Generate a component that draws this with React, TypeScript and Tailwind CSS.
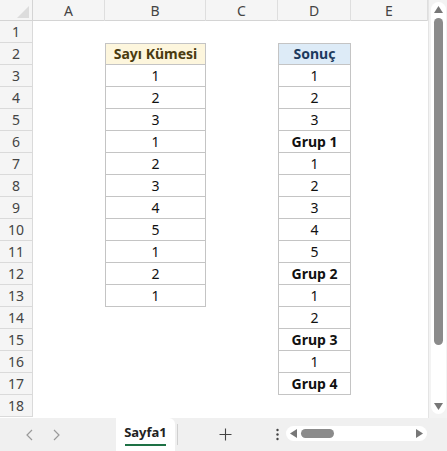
import React from "react";

const bVals: (string | null)[] = [null, "Sayı Kümesi", "1", "2", "3", "1", "2", "3", "4", "5", "1", "2", "1", null, null, null, null, null];
const dVals: (string | null)[] = [null, "Sonuç", "1", "2", "3", "Grup 1", "1", "2", "3", "4", "5", "Grup 2", "1", "2", "Grup 3", "1", "Grup 4", null];

function Cell({ v, kind, first }: { v: string | null; kind: "b" | "d"; first: boolean }) {
  if (v === null) return <div />;
  const header = first;
  const bold = header || v.startsWith("Grup");
  let bg = "bg-white";
  let color = "text-[#111]";
  if (header && kind === "b") {
    bg = "bg-[#fdf6dd]";
    color = "text-[#4a3b10]";
  }
  if (header && kind === "d") {
    bg = "bg-[#ddebf7]";
    color = "text-[#1c3a5e]";
  }
  return (
    <div
      className={`${bg} ${color} ${bold ? "font-bold" : ""} ${header ? "border-t" : ""} border-l border-r border-b border-[#c4c4c4] flex items-center justify-center text-[14px] leading-none h-[22px]`}
    >
      {v}
    </div>
  );
}

export default function App() {
  const rows = Array.from({ length: 18 }, (_, i) => i);
  return (
    <div
      className="w-[447px] h-[451px] flex flex-col bg-white overflow-hidden"
      style={{ fontFamily: '"Noto Sans", "Open Sans", sans-serif' }}
    >
      <div className="flex flex-1 min-h-0">
        <div className="flex-1 flex flex-col">
          {/* column headers */}
          <div className="grid grid-cols-[33px_72px_101px_72px_73px_1fr] h-[21px] bg-[#f5f5f5] text-[#444] text-[14px] border-b border-[#d4d4d4]">
            <div className="relative border-r border-[#d4d4d4]">
              <svg className="absolute right-[3px] bottom-[3px]" width="12" height="12" viewBox="0 0 12 12">
                <polygon points="12,0 12,12 0,12" fill="#dcdcdc" />
              </svg>
            </div>
            {["A", "B", "C", "D", "E"].map((c) => (
              <div key={c} className="flex items-center justify-center border-r border-[#dedede]">
                {c}
              </div>
            ))}
          </div>
          {rows.map((i) => (
            <div key={i} className="grid grid-cols-[33px_72px_101px_72px_73px_1fr] h-[22px]">
              <div className="bg-[#f5f5f5] border-r border-b border-[#dadada] text-[#444] text-[14px] flex items-center justify-center">
                {i + 1}
              </div>
              <div />
              <Cell v={bVals[i]} kind="b" first={i === 1} />
              <div />
              <Cell v={dVals[i]} kind="d" first={i === 1} />
              <div />
            </div>
          ))}
        </div>
        {/* vertical scrollbar */}
        <div className="w-[19px] bg-[#f3f3f3] border-l border-[#e4e4e4] flex flex-col items-center pt-[2px] pb-[4px]">
          <div className="w-[15px] flex-1 bg-white rounded-full flex flex-col items-center py-[4px]">
            <svg width="9" height="7" viewBox="0 0 9 7">
              <polygon points="4.5,0 9,7 0,7" fill="#777" />
            </svg>
            <div className="w-[9px] h-[327px] mt-[5px] bg-[#8b8b8b] rounded-full" />
            <div className="flex-1" />
            <svg width="9" height="7" viewBox="0 0 9 7">
              <polygon points="0,0 9,0 4.5,7" fill="#777" />
            </svg>
          </div>
        </div>
      </div>
      {/* bottom bar */}
      <div className="h-[33px] bg-[#f0f0f0] flex items-stretch text-[#555]">
        <div className="w-[116px] flex items-center pl-[26px] gap-[18px] text-[#999]">
          <svg width="8" height="12" viewBox="0 0 8 12">
            <polyline points="6,1 1,6 6,11" fill="none" stroke="#9a9a9a" strokeWidth="1.2" />
          </svg>
          <svg width="8" height="12" viewBox="0 0 8 12">
            <polyline points="2,1 7,6 2,11" fill="none" stroke="#9a9a9a" strokeWidth="1.2" />
          </svg>
        </div>
        <div className="w-[59px] bg-white rounded-tr-[6px] flex flex-col items-center justify-center">
          <span className="text-[13px] font-bold text-[#222] leading-none pt-[2px]">Sayfa1</span>
          <div className="w-[41px] h-[2px] bg-[#1e7145] mt-[5px]" />
        </div>
        <div className="w-px bg-[#d0d0d0] my-[6px] ml-[2px]" />
        <div className="w-[92px] flex items-center justify-center pl-[2px]">
          <svg width="13" height="13" viewBox="0 0 13 13">
            <path d="M6.5 0.5 V12.5 M0.5 6.5 H12.5" stroke="#444" strokeWidth="1.1" />
          </svg>
        </div>
        <div className="w-[14px] flex items-center justify-center">
          <svg width="3" height="13" viewBox="0 0 3 13">
            <circle cx="1.5" cy="2" r="1.2" fill="#444" />
            <circle cx="1.5" cy="6.5" r="1.2" fill="#444" />
            <circle cx="1.5" cy="11" r="1.2" fill="#444" />
          </svg>
        </div>
        <div className="flex-1 flex items-center pl-[2px] pr-[20px] pb-[2px]">
          <div className="flex-1 h-[15px] bg-white rounded-full flex items-center px-[4px] gap-[4px]">
            <svg width="7" height="9" viewBox="0 0 7 9">
              <polygon points="0,4.5 7,0 7,9" fill="#777" />
            </svg>
            <div className="w-[33px] h-[9px] bg-[#8b8b8b] rounded-full" />
            <div className="flex-1" />
            <svg width="7" height="9" viewBox="0 0 7 9">
              <polygon points="7,4.5 0,0 0,9" fill="#777" />
            </svg>
          </div>
        </div>
      </div>
    </div>
  );
}
